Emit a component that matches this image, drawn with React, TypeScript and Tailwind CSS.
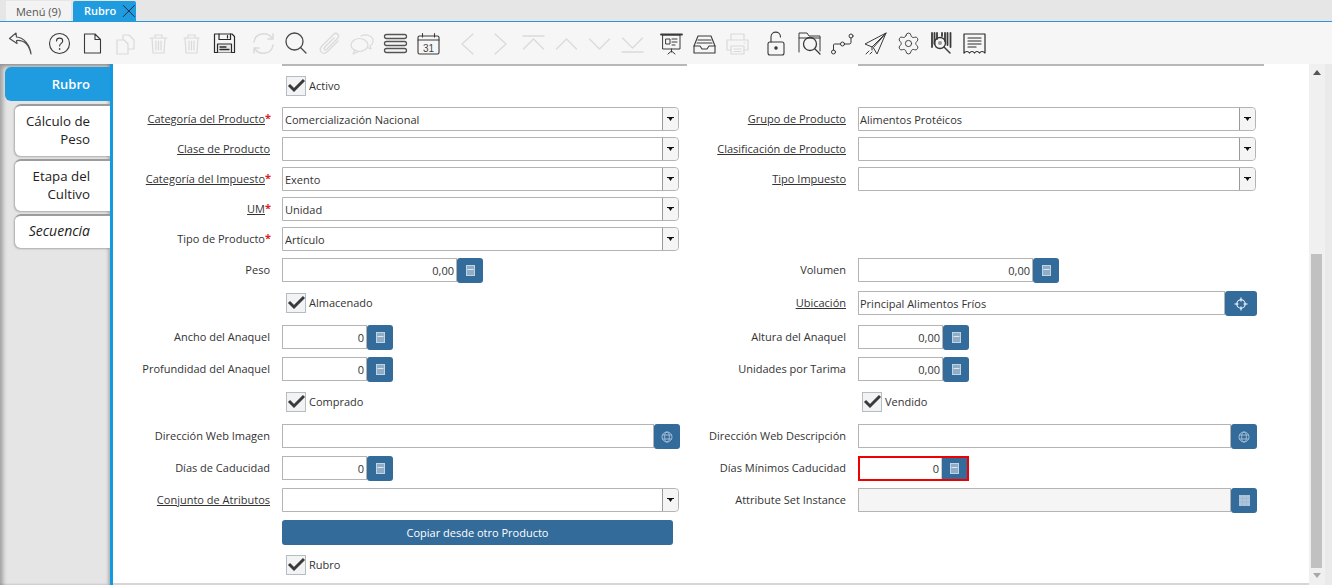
import type { ReactNode } from "react";
import { Settings } from "lucide-react";

const DARK = "#3a3a3a";
const OFF = "#dadada";

function Ico({ c = DARK, w = 1.1, children }: { c?: string; w?: number; children: ReactNode }) {
  return (
    <svg width="33" height="33" viewBox="0 0 33 33" fill="none" stroke={c} strokeWidth={w} strokeLinejoin="round" strokeLinecap="round">
      {children}
    </svg>
  );
}

const toolbarGroups: ReactNode[][] = [
  [
    <Ico c="#505050" w={1.2}>
      <path d="M12 6 L5.5 11.5 L13 16.5 L12.5 13.5 C19.5 13 25 17.5 27 27 C26 18 20 10.5 12.5 10 Z" />
    </Ico>,
  ],
  [
    <Ico>
      <circle cx="16.5" cy="16.5" r="10" />
      <path d="M13.5 14 C13.5 10.2 19.7 10.2 19.7 14 C19.7 16.4 16.6 16.4 16.6 19" />
      <path d="M16.6 21.8 v0.4" strokeWidth="1.5" />
    </Ico>,
    <Ico>
      <path d="M8.5 7 H19 L24.5 12.5 V26 H8.5 Z M19 7 V12.5 H24.5" />
    </Ico>,
    <Ico c={OFF} w={1.2}>
      <path d="M8 13 H15 L19 17 V27 H8 Z M14 8 H20 L25 13 V22 H19 M14 8 V13" />
    </Ico>,
    <Ico c={OFF} w={1.2}>
      <path d="M8 11 H25 M13 11 V8 H20 V11 M10 11 L11 26 H22 L23 11 M14 14 V23 M16.5 14 V23 M19 14 V23" />
    </Ico>,
    <Ico c={OFF} w={1.2}>
      <path d="M9 11 H24 M13 11 V8 H20 V11 M10 11 L11 26 H22 L23 11 M14 14 V23 M16.5 14 V23 M19 14 V23" />
    </Ico>,
    <Ico c="#2a2a2a" w={1.2}>
      <path d="M6.5 7 H24 L26.5 9.5 V25.5 H6.5 Z" />
      <path d="M11 7 V12.5 H22.5 V7 M19.5 8.5 V11" />
      <path d="M9.5 25.5 V17 H23.5 V25.5" fill="#e8e8e8" />
      <path d="M12 20 H18 M12 22.5 H21" strokeWidth="1.3" />
    </Ico>,
  ],
  [
    <Ico c={OFF} w={1.5}>
      <path d="M7 15 C8 6 20 4 25 11 M26 7 V12 H21" />
      <path d="M26 18 C25 27 13 29 8 22 M7 26 V21 H12" />
    </Ico>,
    <Ico c="#484848" w={1.3}>
      <circle cx="14.5" cy="14.5" r="8.5" />
      <path d="M20.5 20.5 L26 26" />
    </Ico>,
    <Ico c={OFF} w={1.3}>
      <path d="M25 14 L14.5 24.5 C10 29 4.5 23.5 9 19 L20.5 7.5 C23.5 4.5 27.5 8.5 24.5 11.5 L13.5 22.5 C12 24 10 22 11.5 20.5 L21 11" />
    </Ico>,
    <Ico c={OFF} w={1.2}>
      <ellipse cx="13.5" cy="18" rx="8.5" ry="6.5" />
      <path d="M9 23 L7 27 L13 24.5" />
      <path d="M15 9 C20 6.5 28 9 27 15 C26.8 17 25.5 18 24 19 L25 22 L21.5 20.5" />
    </Ico>,
    <Ico c="#555555" w={1.3}>
      <rect x="5.5" y="7.5" width="22" height="4" rx="2" />
      <rect x="5.5" y="14.5" width="22" height="4" rx="2" />
      <rect x="5.5" y="21.5" width="22" height="4" rx="2" />
    </Ico>,
    <Ico w={1.1}>
      <rect x="6" y="9" width="21" height="18" rx="1.5" />
      <path d="M6 13 H27 M10.5 6.5 V10 M22.5 6.5 V10" />
      <text x="16.5" y="24.5" textAnchor="middle" fontSize="10" fill="#444444" stroke="none" fontFamily="Liberation Sans, sans-serif">31</text>
    </Ico>,
  ],
  [
    <Ico c={OFF} w={1.3}>
      <path d="M22 7 L11 17 L22 27" />
    </Ico>,
    <Ico c={OFF} w={1.3}>
      <path d="M11 7 L22 17 L11 27" />
    </Ico>,
    <Ico c={OFF} w={1.3}>
      <path d="M6 9 H27 M6.5 22 L16.5 12 L26.5 22" />
    </Ico>,
    <Ico c={OFF} w={1.3}>
      <path d="M6.5 22 L16.5 12 L26.5 22" />
    </Ico>,
    <Ico c={OFF} w={1.3}>
      <path d="M6.5 12 L16.5 22 L26.5 12" />
    </Ico>,
    <Ico c={OFF} w={1.3}>
      <path d="M6.5 11 L16.5 21 L26.5 11 M6 25 H27" />
    </Ico>,
  ],
  [
    <Ico w={1}>
      <path d="M6 7.5 H27" strokeWidth="1.8" />
      <rect x="8" y="8" width="17" height="14" />
      <path d="M11 12 H15 V17 H11 Z M17 12 H22 M17 15 H22 M17 18 H20" />
      <path d="M16.5 22 V25 M13 27 L16.5 24 L20 27" />
    </Ico>,
    <Ico w={1.1}>
      <path d="M6 19 L10 9 H23 L27 19 V26 H6 Z" />
      <path d="M6 19 H12 L14 22 H19 L21 19 H27 M10 13 H23 M9 16 H24" />
    </Ico>,
    <Ico c={OFF} w={1.2}>
      <path d="M10 13 V7 H23 V13 M10 23 H6 V13 H27 V23 H23" />
      <rect x="10" y="19" width="13" height="8" />
      <path d="M13 22 H20 M13 24.5 H20 M23 16 h1" />
    </Ico>,
  ],
  [
    <Ico w={1.1}>
      <rect x="8" y="15" width="16" height="13" rx="2" />
      <path d="M11 15 V10 C11 3.5 20.5 3.5 20.5 10" />
      <circle cx="16" cy="21" r="1.2" fill="#3a3a3a" />
    </Ico>,
    <Ico w={1}>
      <path d="M6 25 V6 H14 L16 9 H27 V24" />
      <path d="M6 11 H27" />
      <circle cx="17" cy="17" r="6.5" strokeWidth="1.3" />
      <path d="M22 22 L27 27" strokeWidth="1.3" />
    </Ico>,
    <Ico w={1}>
      <circle cx="7.5" cy="25" r="2" />
      <circle cx="16.5" cy="17" r="2" />
      <circle cx="25" cy="9" r="2" />
      <path d="M7.5 23 V18 C7.5 17 8 17 9 17 H14.5 M18.5 17 H23 C24.5 17 25 16.5 25 15 V11" />
    </Ico>,
    <Ico w={1}>
      <path d="M27 6 L6 17 L13 20 L27 6 L18 27 L14.5 21 Z M13 20 V23 M10 24 L7 27 M13 25 L11 27" />
    </Ico>,
    <div className="w-[33px] h-[33px] flex items-center justify-center">
      <Settings size={25} strokeWidth={0.9} color="#3a3a3a" />
    </div>,
    <Ico w={1.1}>
      <path d="M7 6 V20 M9.5 6 V17 M12 6 V12 M17 6 V9 M20 6 V14 M22.5 6 V18 M25.5 6 V20" strokeWidth="1.8" />
      <circle cx="15" cy="16" r="5.5" strokeWidth="1.4" />
      <circle cx="15" cy="16" r="2" fill="#999999" stroke="none" />
      <path d="M19 20 L25 26" strokeWidth="1.4" />
    </Ico>,
    <Ico c="#2a2a2a" w={1.2}>
      <path d="M6 7 H27 V26 C25 24 23 24 21.5 26 C20 24 18 24 16.5 26 C15 24 13 24 11.5 26 C10 24 8 24 6 26 Z" />
      <path d="M10 11 H23 M10 14 H23 M10 17 H23 M10 20 H18" />
    </Ico>,
  ],
];

function CalcIcon() {
  return (
    <svg width="9" height="11" viewBox="0 0 9 11">
      <rect x="0.5" y="0.5" width="8" height="10" fill="#8fadc9" stroke="#c2d3e2" />
      <rect x="1.5" y="4" width="6" height="1" fill="#dbe6f0" />
    </svg>
  );
}

function GlobeIcon() {
  return (
    <svg width="12" height="12" viewBox="0 0 12 12" fill="none" stroke="#a9c2d9" strokeWidth="0.9">
      <circle cx="6" cy="6" r="5" />
      <ellipse cx="6" cy="6" rx="2.3" ry="5" />
      <path d="M1 4 H11 M1 8 H11" />
    </svg>
  );
}

function GridIcon() {
  return (
    <svg width="11" height="11" viewBox="0 0 11 11">
      <rect width="11" height="11" fill="#aec5da" />
      <path d="M0 3.5 H11 M0 7 H11 M3.6 0 V11 M7.3 0 V11" stroke="#9ab6d0" strokeWidth="0.6" />
    </svg>
  );
}

function TargetIcon() {
  return (
    <svg width="14" height="14" viewBox="0 0 14 14" fill="none" stroke="#ffffff" strokeWidth="1.1">
      <circle cx="7" cy="7" r="4.2" />
      <path d="M7 0.5 V4.5 M7 9.5 V13.5 M0.5 7 H4.5 M9.5 7 H13.5" />
    </svg>
  );
}

function Label({ text, link, req }: { text?: string; link?: boolean; req?: boolean }) {
  return (
    <div className="w-[157px] mr-3 h-6 shrink-0 text-right leading-[23px] text-[#333333] whitespace-nowrap">
      <span className={link ? "underline" : ""}>{text}</span>
      {req && <span className="inline-block w-[5px] text-left font-bold text-[#e02020] relative -top-[1px]">*</span>}
    </div>
  );
}

function Select({ value, wide }: { value?: string; wide?: boolean }) {
  return (
    <div className={`flex h-6 border border-[#b4b4b4] rounded-r-[4px] bg-white ${wide ? "w-[398px]" : "w-[397px]"}`}>
      <div className={`flex-1 leading-[23px] text-[#333333] ${wide ? "px-[1px]" : "px-[2px]"}`}>{value}</div>
      <div className="w-4 bg-[#f5f5f5] border-l border-[#9a9a9a] rounded-r-[4px] flex items-center justify-center">
        <svg width="7" height="4" viewBox="0 0 7 4">
          <path d="M0 0 H7 V1 H5.5 L3.5 4 L1.5 1 H0 Z" fill="#111111" />
        </svg>
      </div>
    </div>
  );
}

function Trigger({ w = "w-[26px]", children }: { w?: string; children: ReactNode }) {
  return <div className={`${w} h-[25px] shrink-0 bg-[#336b9b] rounded-[3px] flex items-center justify-center`}>{children}</div>;
}

function Num({ value, w }: { value: string; w: string }) {
  return (
    <div className="flex">
      <div className={`${w} h-6 border border-[#b4b4b4] bg-white text-right pr-[2px] leading-[24px] text-[#333333]`}>{value}</div>
      <Trigger>
        <CalcIcon />
      </Trigger>
    </div>
  );
}

function Text({ value, w, btn, trigger, off }: { value?: string; w: string; btn?: string; trigger: ReactNode; off?: boolean }) {
  return (
    <div className="flex">
      <div className={`${w} h-6 border border-[#b4b4b4] px-[1px] leading-[23px] text-[#333333] ${off ? "bg-[#f5f5f5]" : "bg-white"}`}>{value}</div>
      <Trigger w={btn}>{trigger}</Trigger>
    </div>
  );
}

function Check({ text, className = "" }: { text: string; className?: string }) {
  return (
    <div className={`flex items-center h-[21px] pl-1 text-[#333333] ${className}`}>
      <div className="w-5 h-5 border border-[#b4bcc4] bg-[#f3f3f3] flex items-center justify-center">
        <svg width="18" height="15" viewBox="0 0 18 15" fill="none" stroke="#3a3a3a" strokeWidth="3">
          <path d="M2 7 L7 12 L17 2" />
        </svg>
      </div>
      <span className="ml-[3px] mt-[2px]">{text}</span>
    </div>
  );
}

function Cell({ label, link, req, children }: { label?: string; link?: boolean; req?: boolean; children?: ReactNode }) {
  return (
    <div className="flex w-[576px] shrink-0 items-start">
      <Label text={label} link={link} req={req} />
      {children}
    </div>
  );
}

function Row({ className, children }: { className: string; children: ReactNode }) {
  return <div className={`flex items-start ${className}`}>{children}</div>;
}

const sideTab = "bg-white ml-[15px] rounded-l-[6px] border-t-2 border-[#9c9c9c] pr-5 text-right text-[13.3px] leading-[18px] text-[#222222] shadow-[-1px_1px_2px_rgba(0,0,0,0.25)]";

export default function App() {
  return (
    <div className="w-[1332px] h-[585px] overflow-hidden flex flex-col bg-white text-[11px] font-['Open_Sans',sans-serif]">
      <div className="h-[22px] shrink-0 bg-[#e6e6e6] border-b border-[#2c97d6] flex items-end pl-[6px] gap-[2px]">
        <div className="w-[65px] h-5 bg-[#f3f3f3] text-[#555555] text-center leading-[21px]">Menú (9)</div>
        <div className="w-[63px] h-5 bg-[#1f9be0] text-white rounded-t-[2px] flex items-center pl-[11px] font-semibold">
          <span>Rubro</span>
          <svg className="ml-[6px]" width="14" height="14" viewBox="0 0 14 14" stroke="#1a2a3a" strokeWidth="1">
            <path d="M1 1 L13 13 M13 1 L1 13" />
          </svg>
        </div>
      </div>

      <div className="h-[42px] shrink-0 bg-[#f6f6f6] flex items-center pl-1 gap-[6px]">
        {toolbarGroups.map((group, i) => (
          <div key={i} className="flex">
            {group.map((icon, j) => (
              <div key={j} className="w-[33px] h-[33px]">
                {icon}
              </div>
            ))}
          </div>
        ))}
      </div>

      <div className="flex flex-1 min-h-0">
        <div className="w-[110px] shrink-0 bg-[#e5e5e5] shadow-[inset_3px_3px_4px_rgba(0,0,0,0.3),inset_-2px_0_3px_rgba(0,0,0,0.2)] pt-[3px] flex flex-col gap-[3px]">
          <div className="h-[34px] ml-[5px] bg-[#1f9be0] rounded-l-[6px] text-white text-[13px] font-semibold text-right pr-5 leading-[34px]">Rubro</div>
          <div className={`${sideTab} h-[52px] pt-[6px]`}>Cálculo de Peso</div>
          <div className={`${sideTab} h-[52px] pt-[6px]`}>Etapa del Cultivo</div>
          <div className={`${sideTab} h-[34px] pt-[6px] italic text-[14px]`}>Secuencia</div>
        </div>

        <div className="flex-1 border-l-[3px] border-[#119ae2] flex min-w-0">
          <div className="w-[1196px] shrink-0 border-b-2 border-[#d6d6d6] flex flex-col">
            <div className="flex h-[2px] shrink-0">
              <div className="ml-[169px] w-[405px] h-[2px] bg-[#b8b8b8]" />
              <div className="ml-[171px] w-[406px] h-[2px] bg-[#b8b8b8]" />
            </div>
            <Row className="h-[21px] mt-[9px]">
              <Cell>
                <Check text="Activo" />
              </Cell>
            </Row>
            <Row className="h-6 mt-[11px]">
              <Cell label="Categoría del Producto" link req>
                <Select value="Comercialización Nacional" />
              </Cell>
              <Cell label="Grupo de Producto" link>
                <Select value="Alimentos Protéicos" wide />
              </Cell>
            </Row>
            <Row className="h-6 mt-[6px]">
              <Cell label="Clase de Producto" link>
                <Select />
              </Cell>
              <Cell label="Clasificación de Producto" link>
                <Select wide />
              </Cell>
            </Row>
            <Row className="h-6 mt-[6px]">
              <Cell label="Categoría del Impuesto" link req>
                <Select value="Exento" />
              </Cell>
              <Cell label="Tipo Impuesto" link>
                <Select wide />
              </Cell>
            </Row>
            <Row className="h-6 mt-[6px]">
              <Cell label="UM" link req>
                <Select value="Unidad" />
              </Cell>
            </Row>
            <Row className="h-6 mt-[6px]">
              <Cell label="Tipo de Producto" req>
                <Select value="Artículo" />
              </Cell>
            </Row>
            <Row className="h-6 mt-[7px]">
              <Cell label="Peso">
                <Num value="0,00" w="w-[175px]" />
              </Cell>
              <Cell label="Volumen">
                <Num value="0,00" w="w-[175px]" />
              </Cell>
            </Row>
            <Row className="h-6 mt-[9px]">
              <Cell>
                <Check text="Almacenado" className="mt-px" />
              </Cell>
              <Cell label="Ubicación" link>
                <Text value="Principal Alimentos Fríos" w="w-[367px]" btn="w-8" trigger={<TargetIcon />} />
              </Cell>
            </Row>
            <Row className="h-6 mt-[10px]">
              <Cell label="Ancho del Anaquel">
                <Num value="0" w="w-[85px]" />
              </Cell>
              <Cell label="Altura del Anaquel">
                <Num value="0,00" w="w-[85px]" />
              </Cell>
            </Row>
            <Row className="h-6 mt-2">
              <Cell label="Profundidad del Anaquel">
                <Num value="0" w="w-[85px]" />
              </Cell>
              <Cell label="Unidades por Tarima">
                <Num value="0,00" w="w-[85px]" />
              </Cell>
            </Row>
            <Row className="h-[21px] mt-[10px]">
              <Cell>
                <Check text="Comprado" />
              </Cell>
              <Cell>
                <Check text="Vendido" />
              </Cell>
            </Row>
            <Row className="h-6 mt-3">
              <Cell label="Dirección Web Imagen">
                <Text w="w-[372px]" trigger={<GlobeIcon />} />
              </Cell>
              <Cell label="Dirección Web Descripción">
                <Text w="w-[373px]" trigger={<GlobeIcon />} />
              </Cell>
            </Row>
            <Row className="h-6 mt-2">
              <Cell label="Días de Caducidad">
                <Num value="0" w="w-[85px]" />
              </Cell>
              <Cell label="Días Mínimos Caducidad">
                <div className="flex h-[25px] w-[111px] border-2 border-[#f00000]">
                  <div className="flex-1 bg-white border-r border-[#cccccc] text-right pr-[2px] leading-[22px] text-[#333333]">0</div>
                  <div className="w-[25px] bg-[#336b9b] flex items-center justify-center">
                    <CalcIcon />
                  </div>
                </div>
              </Cell>
            </Row>
            <Row className="h-6 mt-2">
              <Cell label="Conjunto de Atributos" link>
                <Select />
              </Cell>
              <Cell label="Attribute Set Instance">
                <Text w="w-[373px]" off trigger={<GridIcon />} />
              </Cell>
            </Row>
            <Row className="h-[25px] mt-2">
              <Cell>
                <div className="w-[391px] h-[25px] bg-[#336b9b] rounded-[3px] text-white text-center leading-[26px]">Copiar desde otro Producto</div>
              </Cell>
            </Row>
            <Row className="h-[21px] mt-[9px]">
              <Cell>
                <Check text="Rubro" />
              </Cell>
            </Row>
          </div>

          <div className="w-[16px] shrink-0 bg-[#f0f0f0] flex flex-col items-center pl-[2px] pr-[3px] relative">
            <svg className="mt-[6px]" width="8" height="5" viewBox="0 0 8 5">
              <path d="M4 0 L8 5 H0 Z" fill="#555555" />
            </svg>
            <div className="w-[11px] h-[314px] bg-[#c1c1c1] mt-[179px]" />
            <svg className="mt-[5px]" width="8" height="5" viewBox="0 0 8 5">
              <path d="M0 0 H8 L4 5 Z" fill="#a8a8a8" />
            </svg>
          </div>
          <div className="flex-1 bg-[#eaeaea]" />
        </div>
      </div>
    </div>
  );
}
